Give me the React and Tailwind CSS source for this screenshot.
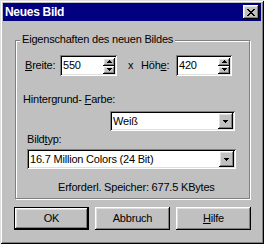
const field =
  'bg-white shadow-[inset_1px_1px_0_#808080,inset_-1px_-1px_0_#fff,inset_2px_2px_0_#000,inset_-2px_-2px_0_#dfdfdf]';
const raised =
  'bg-[#c0c0c0] shadow-[inset_-1px_-1px_0_#000,inset_1px_1px_0_#fff,inset_-2px_-2px_0_#808080,inset_2px_2px_0_#dfdfdf]';

function Arrow({ up = false, w = 7, h = 4 }) {
  const pts = up ? `0,${h} ${w},${h} ${w / 2},0` : `0,0 ${w},0 ${w / 2},${h}`;
  return (
    <svg width={w} height={h} viewBox={`0 0 ${w} ${h}`} shapeRendering="crispEdges">
      <polygon points={pts} fill="#000" />
    </svg>
  );
}

function SpinEdit({ value, width }) {
  return (
    <div className={`${field} flex h-[21px] items-center pl-[2px] pr-[2px]`} style={{ width }}>
      <span className="flex-1 pl-[1px] leading-[13px]">{value}</span>
      <div className="flex h-[16px] w-[12px] flex-col">
        <div className={`${raised} flex h-[8px] items-center justify-center`}>
          <Arrow up w={5} h={3} />
        </div>
        <div className={`${raised} flex h-[8px] items-center justify-center`}>
          <Arrow w={5} h={3} />
        </div>
      </div>
    </div>
  );
}

function Combo({ value, className = '' }) {
  return (
    <div className={`${field} flex h-[20px] items-center pl-[3px] pr-[2px] ${className}`}>
      <span className="flex-1 leading-[13px]">{value}</span>
      <div className={`${raised} flex h-[16px] w-[15px] items-center justify-center`}>
        <Arrow w={5} h={3} />
      </div>
    </div>
  );
}

function Button({ children, primary = false }) {
  return (
    <button
      className={`${raised} flex h-[23px] w-[75px] items-center justify-center leading-[13px] ${
        primary ? 'outline outline-1 outline-black outline-offset-[-1px] shadow-[inset_-2px_-2px_0_#000,inset_2px_2px_0_#fff,inset_-3px_-3px_0_#808080,inset_3px_3px_0_#dfdfdf]' : ''
      }`}
    >
      {children}
    </button>
  );
}

export default function App() {
  return (
    <div className="h-[244px] w-[264px] bg-[#c0c0c0] p-[3px] font-['Liberation_Sans',Arial,sans-serif] text-[11px] tracking-[-0.2px] text-black shadow-[inset_1px_1px_0_#dfdfdf,inset_-1px_-1px_0_#000,inset_2px_2px_0_#fff,inset_-2px_-2px_0_#808080]">
      {/* title bar */}
      <div className="flex h-[18px] items-center justify-between bg-[#000080] pl-[2px] pr-[2px]">
        <span className="text-[12px] font-bold leading-[14px] tracking-[-0.3px] text-white">Neues Bild</span>
        <div className={`${raised} flex h-[14px] w-[16px] items-center justify-center`}>
          <svg width="8" height="7" viewBox="0 0 8 7" shapeRendering="crispEdges">
            <path
              d="M0 0h2v1H0zM6 0h2v1H6zM1 1h2v1H1zM5 1h2v1H5zM2 2h4v1H2zM3 3h2v1H3zM2 4h4v1H2zM1 5h2v1H1zM5 5h2v1H5zM0 6h2v1H0zM6 6h2v1H6z"
              fill="#000"
            />
          </svg>
        </div>
      </div>

      <div className="pl-[12px] pt-[19px]">
        {/* group box */}
        <div className="relative h-[159px] w-[235px] border border-[#808080] shadow-[inset_1px_1px_0_#fff,1px_1px_0_#fff]">
          <span className="absolute left-[4px] top-[-8px] bg-[#c0c0c0] px-[2px] leading-[13px]">
            Eigenschaften des neuen Bildes
          </span>

          <div className="flex items-center pl-[9px] pt-[14px]">
            <span className="w-[35px] leading-[13px]">
              <span className="underline underline-offset-[1px]">B</span>reite:
            </span>
            <SpinEdit value="550" width={57} />
            <span className="ml-[11px] w-[13px] leading-[13px]">x</span>
            <span className="w-[35px] leading-[13px]">
              Höh<span className="underline underline-offset-[1px]">e</span>:
            </span>
            <SpinEdit value="420" width={56} />
          </div>

          <div className="mt-[17px] pl-[7px] leading-[13px]">
            Hintergrund- <span className="underline underline-offset-[1px]">F</span>arbe:
          </div>
          <Combo value="Weiß" className="ml-[94px] mt-[5px] w-[125px]" />

          <div className="mt-[2px] pl-[11px] leading-[13px]">
            Bild<span className="underline underline-offset-[1px]">t</span>yp:
          </div>
          <Combo value="16.7 Million Colors (24 Bit)" className="ml-[11px] mt-[3px] w-[209px]" />

          <div className="mt-[12px] pl-[42px] leading-[13px]">Erforderl. Speicher: 677.5 KBytes</div>
        </div>

        {/* buttons */}
        <div className="mt-[8px] flex gap-[6px] pl-[-1px] ml-[-1px]">
          <Button primary>OK</Button>
          <Button>Abbruch</Button>
          <Button>
            <span className="underline underline-offset-[1px]">H</span>ilfe
          </Button>
        </div>
      </div>
    </div>
  );
}
